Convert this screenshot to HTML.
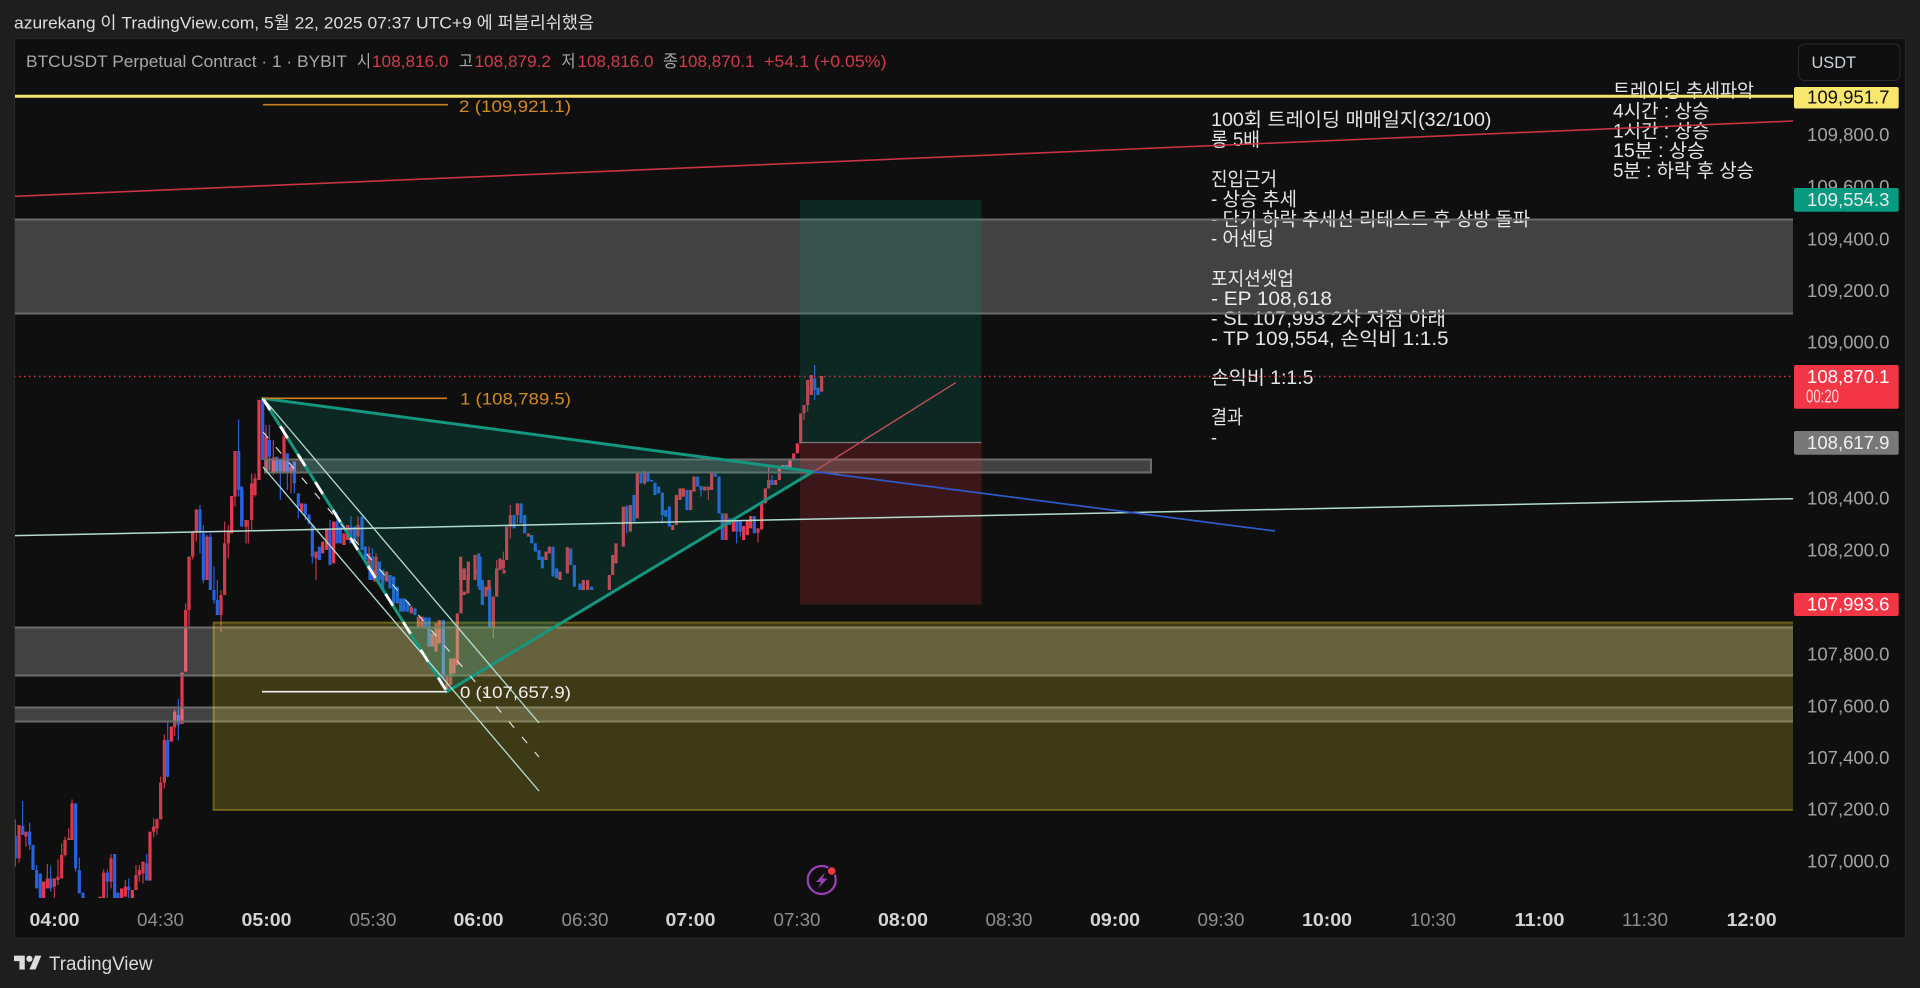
<!DOCTYPE html>
<html lang="ko">
<head>
<meta charset="utf-8">
<title>BTCUSDT Chart</title>
<style>
html,body{margin:0;padding:0;background:#1e1e1e;width:1920px;height:988px;overflow:hidden}
svg{display:block}
text{font-family:"Liberation Sans","Noto Sans CJK KR",sans-serif}
.n{fill:#e6e6e6;font-size:19px}
.a{fill:#a3a3a3;font-size:18px}
.l{fill:#a8a8a8;font-size:17px}
.r{fill:#d03c4c;font-size:17px}
.tb{fill:#d4d4d4;font-size:18px;font-weight:bold}
.tr{fill:#8e8e8e;font-size:18px}
.p{font-size:18px}
</style>
</head>
<body>
<svg width="1920" height="988" viewBox="0 0 1920 988" xmlns="http://www.w3.org/2000/svg">
<defs>
<clipPath id="pane"><rect x="15" y="39" width="1778" height="859"/></clipPath>
<clipPath id="pane2"><rect x="15" y="39" width="1778" height="899"/></clipPath>
</defs>
<rect width="1920" height="988" fill="#1e1e1e"/>
<text x="14" y="28.5" font-size="17" fill="#dedede" textLength="580" lengthAdjust="spacingAndGlyphs">azurekang 이 TradingView.com, 5월 22, 2025 07:37 UTC+9 에 퍼블리쉬했음</text>
<rect x="14.5" y="38.5" width="1891" height="899.5" fill="#0f0f0f" stroke="#2a2a2a"/>

<!-- annotation text -->
<g class="ann">
<text class="n" x="1211" y="126" textLength="280.5" lengthAdjust="spacingAndGlyphs">100회 트레이딩 매매일지(32/100)</text>
<text class="n" x="1211" y="146" textLength="49" lengthAdjust="spacingAndGlyphs">롱 5배</text>
<text class="n" x="1211" y="185.5" textLength="66" lengthAdjust="spacingAndGlyphs">진입근거</text>
<text class="n" x="1211" y="205.5" textLength="86" lengthAdjust="spacingAndGlyphs">- 상승 추세</text>
<text class="n" x="1211" y="225.5" textLength="319" lengthAdjust="spacingAndGlyphs">- 단기 하락 추세선 리테스트 후 상방 돌파</text>
<text class="n" x="1211" y="245" textLength="63" lengthAdjust="spacingAndGlyphs">- 어센딩</text>
<text class="n" x="1211" y="285" textLength="83" lengthAdjust="spacingAndGlyphs">포지션셋업</text>
<text class="n" x="1211" y="305" textLength="121" lengthAdjust="spacingAndGlyphs">- EP 108,618</text>
<text class="n" x="1211" y="325" textLength="235" lengthAdjust="spacingAndGlyphs">- SL 107,993 2차 저점 아래</text>
<text class="n" x="1211" y="345" textLength="237.5" lengthAdjust="spacingAndGlyphs">- TP 109,554, 손익비 1:1.5</text>
<text class="n" x="1211" y="384" textLength="102.5" lengthAdjust="spacingAndGlyphs">손익비 1:1.5</text>
<text class="n" x="1211" y="423.5" textLength="32" lengthAdjust="spacingAndGlyphs">결과</text>
<text class="n" x="1211" y="444" textLength="6" lengthAdjust="spacingAndGlyphs">-</text>
<text class="n" x="1613" y="97" textLength="141" lengthAdjust="spacingAndGlyphs">트레이딩 추세파악</text>
<text class="n" x="1613" y="117.5" textLength="96.5" lengthAdjust="spacingAndGlyphs">4시간 : 상승</text>
<text class="n" x="1613" y="137.5" textLength="96.5" lengthAdjust="spacingAndGlyphs">1시간 : 상승</text>
<text class="n" x="1613" y="157" textLength="92" lengthAdjust="spacingAndGlyphs">15분 : 상승</text>
<text class="n" x="1613" y="177" textLength="141" lengthAdjust="spacingAndGlyphs">5분 : 하락 후 상승</text>
</g>

<!-- candles -->
<g clip-path="url(#pane)" fill="none">
<g transform="translate(0,500) scale(.33333)">
<path stroke="#e63b4f" stroke-width="9.5" d="M57 975V1075M78 995V1010M131 1145V1195M142 1135V1165M163 1135V1160M174 1130V1140M185 1065V1135M195 1020V1065M206 1015V1020M216 910V1020M300 1190V1195M311 1118V1195M333 1075V1145M365 1165V1195M376 1160V1190M397 1170V1195M408 1125V1170M418 1110V1125M429 1085V1120M450 995V1142M461 980V995M471 958V985M482 848V958M493 720V848M514 680V725M524 635V682M546 518V672M557 330V515M567 170V330M578 95V170M589 28V95M621 110V240M663 285V345M674 130V285M685 95V130M695 0V100"/>
<path stroke="#c8394b" stroke-width="3.5" d="M57 975V1088M78 995V1040M142 1092V1165M163 1135V1195M174 1078V1155M185 1030V1135M195 1010V1070M206 985V1020M216 898V1020M311 1108V1195M333 1062V1165M376 1140V1190M408 1095V1170M418 1095V1145M429 1085V1150M461 955V1012M471 955V1005M482 830V958M493 703V865M524 628V708M557 310V515M567 170V380M578 92V178M589 28V125M621 105V240M663 270V395M674 65V285M685 75V175"/>
<path stroke="#2962e0" stroke-width="9.5" d="M46 1008V1075M68 978V1005M89 995V1035M99 1035V1110M110 1110V1165M121 1120V1195M152 1135V1165M227 910V1105M238 1110V1180M249 1178V1195M322 1118V1145M344 1062V1195M354 1178V1195M386 1160V1170M440 1090V1142M503 720V830M535 645V675M600 28V95M610 100V240M631 110V270M642 270V300M652 300V345"/>
<path stroke="#2962e0" stroke-width="3.5" d="M46 958V1100M68 903V1005M89 968V1050M110 1095V1165M152 1098V1175M227 910V1115M238 1072V1180M322 1108V1195M386 1135V1195M440 1062V1142M503 668V832M535 597V722M600 15V160M610 75V250M631 100V270M642 200V310M652 240V345"/>
</g>
<g transform="translate(190,390) scale(.33333)">
<path stroke="#e63b4f" stroke-width="9.5" d="M125 318V390M135 183V320"/>
<path stroke="#c8394b" stroke-width="3.5" d="M135 183V350"/>
<path stroke="#2962e0" stroke-width="9.5" d="M146 183V300M156 300V390"/>
<path stroke="#2962e0" stroke-width="3.5" d="M146 88V320M156 290V390"/>
</g>
<g transform="translate(240,380) scale(.33333)">
<path stroke="#e63b4f" stroke-width="9.5" d="M18 420V440M35 310V420M45 295V345M57 60V300M78 170V275M100 232V280M132 170V280M153 260V280M185 370V395M228 515V535M248 485V520M260 445V510M281 425V550M312 460V495M323 435V480M354 435V470M387 520V570M408 530V600M439 575V600M662 530V600M673 565V600M685 545V600M705 525V600"/>
<path stroke="#c8394b" stroke-width="3.5" d="M18 420V490M25 420V490M35 280V450M45 280V350M78 135V280M100 180V285M132 140V280M153 260V340M228 515V600M312 460V495M323 435V480M354 410V490M387 500V570M408 520V600"/>
<path stroke="#2962e0" stroke-width="9.5" d="M5 320V440M68 60V240M88 180V230M110 230V280M121 240V278M142 220V275M163 245V310M175 340V380M196 372V405M207 403V430M217 435V530M238 500V540M270 450V555M291 425V490M301 440V490M333 440V490M344 440V490M366 410V510M376 500V540M397 530V600M418 545V600M428 570V600M450 585V600M460 590V600M716 520V600"/>
<path stroke="#2962e0" stroke-width="3.5" d="M68 60V240M88 135V270M121 240V360M142 220V330M163 245V340M175 340V415M196 370V420M207 403V435M217 435V550M270 420V555M291 395V490M333 408V490M366 410V510M397 505V600"/>
</g>
<g transform="translate(240,570) scale(.33333)">
<path stroke="#e63b4f" stroke-width="9.5" d="M405 0V35M440 5V35M514 110V130M535 140V175M546 140V170M577 190V230M588 160V245M598 150V220M621 320V365M632 265V345M642 265V310M652 130V285M663 0V130M673 65V75M684 15V70M706 0V12M738 50V80M760 80V170M770 0V80M792 0V10"/>
<path stroke="#c8394b" stroke-width="3.5" d="M760 80V205M588 160V245M632 265V345"/>
<path stroke="#2962e0" stroke-width="9.5" d="M390 0V30M415 0V40M428 10V60M450 15V55M461 20V100M472 50V100M482 85V125M492 85V125M503 95V125M525 115V135M556 142V175M567 142V230M610 150V325M716 0V50M727 30V105M749 50V175"/>
</g>
<g transform="translate(480,350) scale(.33333)">
<path stroke="#e63b4f" stroke-width="9.5" d="M27 690V720M50 655V720M60 625V660M70 630V655M80 530V630M91 495V530M112 460V495M145 550V560M198 605V630M208 590V610M240 665V690M262 592V670M310 690V720M323 690V720M388 675V720M398 615V675M408 580V640M430 470V590M451 465V545M472 370V505M494 365V400M578 525V540M589 435V525M600 415V450M610 415V440M632 420V480M642 380V425M674 410V422M685 410V420M695 365V420M738 490V570M760 505V545M791 528V570M802 510V555M812 498V535M834 535V548M845 460V538M856 415V460M866 390V415M887 390V405M898 355V390M908 345V355M930 330V355M941 310V330M952 280V310M962 190V280M972 165V190M983 90V165M994 75V135M1025 78V125"/>
<path stroke="#c8394b" stroke-width="3.5" d="M50 630V720M70 605V670M91 465V565M112 460V520M262 590V665M494 362V405M685 410V450M834 535V578M866 350V415M972 165V210M983 90V185"/>
<path stroke="#2962e0" stroke-width="9.5" d="M0 620V720M102 495V535M123 460V520M134 495V550M155 555V580M166 580V605M177 600V630M187 620V655M219 590V680M230 655V685M272 595V645M283 645V710M300 700V720M335 710V720M440 470V520M462 435V515M483 370V400M504 370V395M515 390V395M525 398V435M536 410V430M547 428V495M557 480V500M568 470V530M621 420V480M653 380V410M663 408V420M706 370V380M717 380V490M727 490V570M749 505V525M770 510V545M781 510V545M823 498V550M876 390V405M919 345V355M1004 85V120M1014 113V135"/>
<path stroke="#2962e0" stroke-width="3.5" d="M440 465V550M504 365V395M547 428V520M568 470V530M663 408V440M770 510V580M781 510V560M876 375V405M1004 45V150"/>
</g>
</g>

<!-- drawings -->
<g clip-path="url(#pane2)">
<!-- gray zones -->
<rect x="10" y="219.5" width="1790" height="94" fill="#fff" fill-opacity=".215" stroke="#6c6c6c" stroke-width="2"/>
<rect x="10" y="627.5" width="1790" height="48" fill="#fff" fill-opacity=".215" stroke="#6c6c6c" stroke-width="2"/>
<rect x="10" y="707.5" width="1790" height="14" fill="#fff" fill-opacity=".215" stroke="#6c6c6c" stroke-width="2"/>
<rect x="265" y="459.5" width="886" height="13" fill="#fff" fill-opacity=".215" stroke="#6c6c6c" stroke-width="2"/>
<!-- yellow zone -->
<rect x="213.5" y="622.5" width="1590" height="187.5" fill="#ffe632" fill-opacity=".2" stroke="#ffe632" stroke-opacity=".3" stroke-width="2"/>
<!-- position -->
<rect x="800" y="200" width="181.5" height="242.5" fill="#089981" fill-opacity=".18"/>
<rect x="800" y="442.5" width="181.5" height="162" fill="#f23645" fill-opacity=".2"/>
<path d="M800 442.5H981.5" stroke="#787878" stroke-width="1.2"/>
<!-- triangle -->
<path d="M262.7 398.3L447 691.7L813 471.7Z" fill="#089981" fill-opacity=".18" stroke="#14967f" stroke-width="3" stroke-linejoin="round"/>
<!-- fib channel -->
<path d="M263 398L539 723M263 467L539 791" fill="none" stroke="#b4e0d2" stroke-width="1.3"/>
<path d="M263 432L539 757" fill="none" stroke="#e8e8e8" stroke-width="1.1" stroke-dasharray="8 12"/>
<path d="M262.7 398.3L447 691.7" fill="none" stroke="#fff" stroke-width="2.8" stroke-dasharray="14 19"/>
<!-- long lines -->
<path d="M14 196.4L1793 121" stroke="#c8343f" stroke-width="1.6"/>
<path d="M14 535.7L1793 498.7" stroke="#b2dccd" stroke-width="1.5"/>
<path d="M813 472L956 382.5" stroke="#c8505a" stroke-width="1.3"/>
<path d="M813 471.5L1275 531" stroke="#3059c8" stroke-width="1.7"/>
<path d="M14 376.5H1793" stroke="#d23a47" stroke-width="1.5" stroke-dasharray="1.5 3.5"/>
<path d="M14 96.3H1793" stroke="#f5e46c" stroke-width="3"/>
<!-- fib levels -->
<path d="M263 104.7H448M263 398.3H447" stroke="#c9811f" stroke-width="1.6"/>
<path d="M262 691.7H447" stroke="#f2f2f2" stroke-width="1.7"/>
</g>
<text x="459" y="112" font-size="17" fill="#d18a26" textLength="112" lengthAdjust="spacingAndGlyphs">2 (109,921.1)</text>
<text x="460" y="404.5" font-size="17" fill="#d18a26" textLength="111" lengthAdjust="spacingAndGlyphs">1 (108,789.5)</text>
<text x="460" y="698" font-size="17" fill="#efefef" textLength="111" lengthAdjust="spacingAndGlyphs">0 (107,657.9)</text>

<!-- legend -->
<text class="l" x="26" y="67" textLength="321" lengthAdjust="spacingAndGlyphs">BTCUSDT Perpetual Contract · 1 · BYBIT</text>
<text class="l" x="357" y="67" textLength="14" lengthAdjust="spacingAndGlyphs">시</text>
<text class="r" x="372" y="67" textLength="76.5" lengthAdjust="spacingAndGlyphs">108,816.0</text>
<text class="l" x="459" y="67" textLength="14" lengthAdjust="spacingAndGlyphs">고</text>
<text class="r" x="474.5" y="67" textLength="76.5" lengthAdjust="spacingAndGlyphs">108,879.2</text>
<text class="l" x="561.5" y="67" textLength="14" lengthAdjust="spacingAndGlyphs">저</text>
<text class="r" x="577.5" y="67" textLength="76" lengthAdjust="spacingAndGlyphs">108,816.0</text>
<text class="l" x="663" y="67" textLength="15" lengthAdjust="spacingAndGlyphs">종</text>
<text class="r" x="678.5" y="67" textLength="76" lengthAdjust="spacingAndGlyphs">108,870.1</text>
<text class="r" x="764" y="67" textLength="122.5" lengthAdjust="spacingAndGlyphs">+54.1 (+0.05%)</text>

<!-- price axis -->
<rect x="1798.5" y="44" width="101.5" height="36.5" rx="6" fill="#0f0f0f" stroke="#2a2a2a"/>
<text x="1811.5" y="68" font-size="17" fill="#d1d4dc" textLength="44.5" lengthAdjust="spacingAndGlyphs">USDT</text>
<g>
<text class="a" x="1807" y="141" textLength="82.5" lengthAdjust="spacingAndGlyphs">109,800.0</text>
<text class="a" x="1807" y="193" textLength="82.5" lengthAdjust="spacingAndGlyphs">109,600.0</text>
<text class="a" x="1807" y="245.3" textLength="82.5" lengthAdjust="spacingAndGlyphs">109,400.0</text>
<text class="a" x="1807" y="297" textLength="82.5" lengthAdjust="spacingAndGlyphs">109,200.0</text>
<text class="a" x="1807" y="348.6" textLength="82.5" lengthAdjust="spacingAndGlyphs">109,000.0</text>
<text class="a" x="1807" y="504.7" textLength="82.5" lengthAdjust="spacingAndGlyphs">108,400.0</text>
<text class="a" x="1807" y="556.3" textLength="82.5" lengthAdjust="spacingAndGlyphs">108,200.0</text>
<text class="a" x="1807" y="660.3" textLength="82.5" lengthAdjust="spacingAndGlyphs">107,800.0</text>
<text class="a" x="1807" y="712.3" textLength="82.5" lengthAdjust="spacingAndGlyphs">107,600.0</text>
<text class="a" x="1807" y="763.8" textLength="82.5" lengthAdjust="spacingAndGlyphs">107,400.0</text>
<text class="a" x="1807" y="815.3" textLength="82.5" lengthAdjust="spacingAndGlyphs">107,200.0</text>
<text class="a" x="1807" y="867.3" textLength="82.5" lengthAdjust="spacingAndGlyphs">107,000.0</text>
</g>
<rect x="1794" y="87" width="104.7" height="21.5" rx="2" fill="#f8e76c"/>
<text class="p" x="1807" y="103.3" fill="#111" textLength="82.5" lengthAdjust="spacingAndGlyphs">109,951.7</text>
<rect x="1794" y="188" width="104.7" height="23.7" rx="2" fill="#089981"/>
<text class="p" x="1807" y="206" fill="#eaeaea" textLength="82.5" lengthAdjust="spacingAndGlyphs">109,554.3</text>
<rect x="1794" y="365" width="104.7" height="43.7" rx="2" fill="#f23645"/>
<text class="p" x="1807" y="383" fill="#fff" textLength="82.5" lengthAdjust="spacingAndGlyphs">108,870.1</text>
<text class="p" x="1806" y="402.5" fill="#ffd4d8" textLength="33" lengthAdjust="spacingAndGlyphs">00:20</text>
<rect x="1794" y="431" width="104.7" height="23.7" rx="2" fill="#787878"/>
<text class="p" x="1807" y="449" fill="#f0f0f0" textLength="82.5" lengthAdjust="spacingAndGlyphs">108,617.9</text>
<rect x="1794" y="593" width="104.7" height="23" rx="2" fill="#f23645"/>
<text class="p" x="1807" y="610.5" fill="#fff" textLength="82.5" lengthAdjust="spacingAndGlyphs">107,993.6</text>

<!-- time axis -->
<g>
<text class="tb" x="29.5" y="926" textLength="50" lengthAdjust="spacingAndGlyphs">04:00</text>
<text class="tr" x="137" y="926" textLength="47" lengthAdjust="spacingAndGlyphs">04:30</text>
<text class="tb" x="241.5" y="926" textLength="50" lengthAdjust="spacingAndGlyphs">05:00</text>
<text class="tr" x="349.5" y="926" textLength="47" lengthAdjust="spacingAndGlyphs">05:30</text>
<text class="tb" x="453.5" y="926" textLength="50" lengthAdjust="spacingAndGlyphs">06:00</text>
<text class="tr" x="561.5" y="926" textLength="47" lengthAdjust="spacingAndGlyphs">06:30</text>
<text class="tb" x="665.5" y="926" textLength="50" lengthAdjust="spacingAndGlyphs">07:00</text>
<text class="tr" x="773.5" y="926" textLength="47" lengthAdjust="spacingAndGlyphs">07:30</text>
<text class="tb" x="878" y="926" textLength="50" lengthAdjust="spacingAndGlyphs">08:00</text>
<text class="tr" x="985.5" y="926" textLength="47" lengthAdjust="spacingAndGlyphs">08:30</text>
<text class="tb" x="1090" y="926" textLength="50" lengthAdjust="spacingAndGlyphs">09:00</text>
<text class="tr" x="1197.5" y="926" textLength="47" lengthAdjust="spacingAndGlyphs">09:30</text>
<text class="tb" x="1302" y="926" textLength="50" lengthAdjust="spacingAndGlyphs">10:00</text>
<text class="tr" x="1410" y="926" textLength="46" lengthAdjust="spacingAndGlyphs">10:30</text>
<text class="tb" x="1514.5" y="926" textLength="50" lengthAdjust="spacingAndGlyphs">11:00</text>
<text class="tr" x="1622" y="926" textLength="46" lengthAdjust="spacingAndGlyphs">11:30</text>
<text class="tb" x="1726.7" y="926" textLength="50" lengthAdjust="spacingAndGlyphs">12:00</text>
</g>

<!-- bolt icon -->
<circle cx="821.7" cy="880" r="14" fill="none" stroke="#9c40b8" stroke-width="2.2"/>
<path d="M825 872.5L816 882H821L818.5 888L827.5 878.5H822.5Z" fill="#9c40b8"/>
<circle cx="831.7" cy="871" r="3.8" fill="#f23645" stroke="#0f0f0f" stroke-width="2" paint-order="stroke"/>

<!-- footer logo -->
<g transform="translate(14,952.6) scale(.77)" fill="#dcdcdc">
<path d="M14 22H7V11H0V4h14v18ZM28 22h-8l7.5-18h8L28 22Z"/>
<circle cx="20" cy="8" r="4"/>
</g>
<text x="49" y="970" font-size="19" fill="#dadada" textLength="103.5" lengthAdjust="spacingAndGlyphs">TradingView</text>
</svg>
</body>
</html>
